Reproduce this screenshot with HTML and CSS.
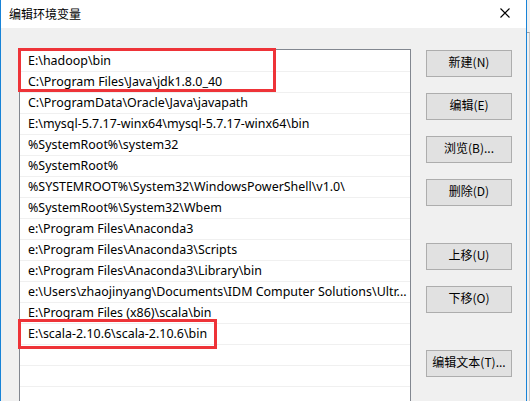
FILE: index.html
```html
<!DOCTYPE html>
<html lang="zh-CN">
<head>
<meta charset="utf-8">
<title>编辑环境变量</title>
<link rel="stylesheet" href="styles.css">
</head>
<body>
<div class="window">
  <div class="titlebar">
    <span class="title">编辑环境变量</span>
    <svg class="close" width="10" height="10" viewBox="0 0 10 10"><path d="M0.5 0.5 L9.5 9.5 M9.5 0.5 L0.5 9.5" stroke="#000" stroke-width="1.1" fill="none"/></svg>
  </div>
  <div class="content">
    <div class="list">
      <div class="row">E:\hadoop\bin</div>
      <div class="row">C:\Program Files\Java\jdk1.8.0_40</div>
      <div class="row">C:\ProgramData\Oracle\Java\javapath</div>
      <div class="row">E:\mysql-5.7.17-winx64\mysql-5.7.17-winx64\bin</div>
      <div class="row">%SystemRoot%\system32</div>
      <div class="row">%SystemRoot%</div>
      <div class="row">%SYSTEMROOT%\System32\WindowsPowerShell\v1.0\</div>
      <div class="row">%SystemRoot%\System32\Wbem</div>
      <div class="row">e:\Program Files\Anaconda3</div>
      <div class="row">e:\Program Files\Anaconda3\Scripts</div>
      <div class="row">e:\Program Files\Anaconda3\Library\bin</div>
      <div class="row">e:\Users\zhaojinyang\Documents\IDM Computer Solutions\Ultr...</div>
      <div class="row">E:\Program Files (x86)\scala\bin</div>
      <div class="row">E:\scala-2.10.6\scala-2.10.6\bin</div>
      <div class="row"></div>
      <div class="row"></div>
      <div class="row"></div>
    </div>
    <div class="buttons">
      <button class="btn">新建(N)</button>
      <button class="btn">编辑(E)</button>
      <button class="btn">浏览(B)...</button>
      <button class="btn">删除(D)</button>
      <button class="btn gap">上移(U)</button>
      <button class="btn">下移(O)</button>
      <button class="btn gap">编辑文本(T)...</button>
    </div>
  </div>
  <div class="mark mark-1"></div>
  <div class="mark mark-2"></div>
</div>
<div class="behind"></div>
</body>
</html>
```
FILE: styles.css
```css
html, body {
  margin: 0;
  padding: 0;
}
body {
  width: 530px;
  height: 401px;
  overflow: hidden;
  display: flex;
  background: #f0f0f0;
  font-family: "Noto Sans", "Noto Sans CJK SC", sans-serif;
  font-size: 12px;
  color: #000;
}
.window {
  position: relative;
  width: 525px;
  height: 401px;
  border-left: 1px solid #1883d7;
  border-right: 1px solid #1883d7;
  background: #f0f0f0;
  display: flex;
  flex-direction: column;
  flex: none;
  overflow: hidden;
}
.behind {
  flex: 1;
  margin-top: 32px;
  border-top: 1px solid #a0a0a0;
  border-right: 1px solid #c8c8c8;
  background: #f0f0f0;
}
.titlebar {
  height: 27px;
  background: #fff;
  display: flex;
  align-items: center;
  justify-content: space-between;
  padding: 0 16px 1px 8px;
  flex: none;
}
.title {
  font-family: "Noto Sans CJK SC", sans-serif;
  font-size: 12px;
  line-height: 16px;
}
.close {
  display: block;
  margin-top: -2px;
}
.content {
  flex: 1;
  display: flex;
  align-items: flex-start;
  padding: 21px 0 0 18px;
  min-height: 0;
  overflow: hidden;
}
.list {
  width: 390px;
  height: 360px;
  border: 1px solid #828790;
  background: #fff;
  padding-top: 1px;
  flex: none;
}
.row {
  height: 20px;
  line-height: 20px;
  border-bottom: 1px solid #f0f0f0;
  padding: 0 8px 0 8px;
  font-size: 12.45px;
  white-space: nowrap;
  overflow: hidden;
}
.buttons {
  display: flex;
  flex-direction: column;
  margin-left: 15px;
  padding-top: 1px;
  gap: 16px;
}
.btn {
  width: 86px;
  height: 27px;
  border: 1px solid #adadad;
  background: #e1e1e1;
  font-family: "Noto Sans CJK SC", sans-serif;
  font-size: 12px;
  line-height: 14px;
  color: #000;
  padding: 0 0 3px 0;
  margin: 0;
}
.btn.gap {
  margin-top: 21px;
}
.mark {
  position: absolute;
  border: 3px solid #ee3338;
  box-sizing: border-box;
}
.mark-1 {
  left: 17px;
  top: 48px;
  width: 258px;
  height: 44px;
}
.mark-2 {
  left: 17px;
  top: 319px;
  width: 199px;
  height: 30px;
}
```
